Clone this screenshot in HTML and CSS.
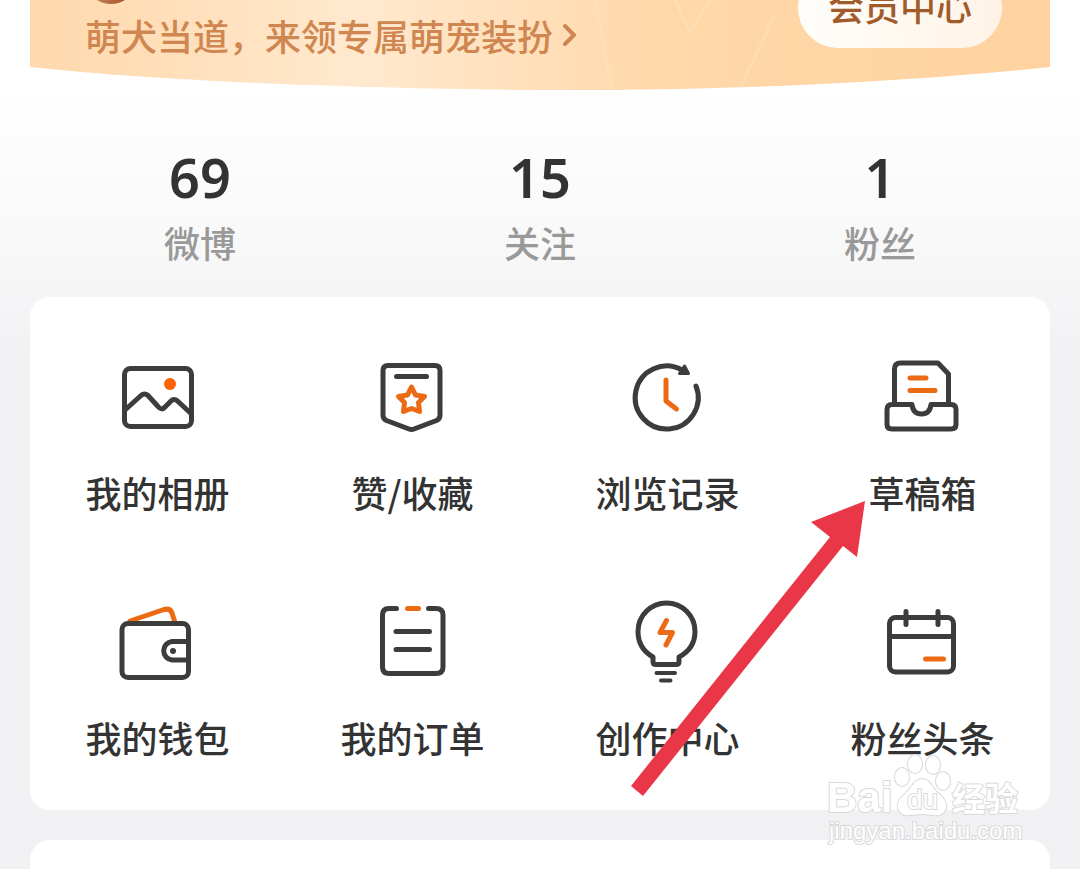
FILE: index.html
```html
<!DOCTYPE html>
<html lang="zh-CN">
<head>
<meta charset="utf-8">
<meta name="viewport" content="width=device-width, initial-scale=1">
<title>我的</title>
<link rel="stylesheet" href="styles.css">
</head>
<body>
<div class="page">
  <header class="banner">
    <svg class="banner-art" viewBox="0 0 1020 90" preserveAspectRatio="none" aria-hidden="true">
      <defs>
        <linearGradient id="gold" x1="0" y1="0" x2="1" y2="0">
          <stop offset="0" stop-color="#ffd9ae"/>
          <stop offset="0.1" stop-color="#ffddb5"/>
          <stop offset="0.32" stop-color="#ffe9cf"/>
          <stop offset="0.5" stop-color="#ffdfb9"/>
          <stop offset="0.62" stop-color="#ffd8a9"/>
          <stop offset="1" stop-color="#ffd2a0"/>
        </linearGradient>
        <linearGradient id="ring" x1="0" y1="0" x2="1" y2="0">
          <stop offset="0" stop-color="#c58a62"/>
          <stop offset="1" stop-color="#a3481f"/>
        </linearGradient>
      </defs>
      <path fill="url(#gold)" d="M0 0H1020V67C870 83 690 90 540 90C370 90 150 83 0 67Z"/>
      <path fill="none" stroke="#ffe3c0" stroke-width="3" opacity="0.5" d="M565 0L582 90M645 0L660 32L680 0M745 15L710 88"/>
      <circle cx="81" cy="-22" r="24" fill="#e8b98f" stroke="url(#ring)" stroke-width="4"/>
    </svg>
    <a class="promo" href="#">萌犬当道，来领专属萌宠装扮<svg class="chevron" viewBox="0 0 14 24" aria-hidden="true"><path d="M2 3L11 12L2 21"/></svg></a>
    <button class="member" type="button">会员中心</button>
  </header>

  <nav class="stats">
    <a class="stat" href="#"><span class="count">69</span><span class="caption">微博</span></a>
    <a class="stat" href="#"><span class="count">15</span><span class="caption">关注</span></a>
    <a class="stat" href="#"><span class="count">1</span><span class="caption">粉丝</span></a>
  </nav>

  <main class="card">
    <nav class="tools">
      <a class="tool" href="#">
        <svg class="icon" viewBox="112 352 91 90" aria-hidden="true">
          <rect x="124.500" y="368.500" width="67" height="58" rx="6"/>
          <path d="M125 410L141 395.500Q144.500 392.500 148 395.500L158 406.500Q161.500 411 165 407L171 401Q174 398 177.500 401L191 413.500"/>
          <circle class="dot" cx="170" cy="384" r="6"/>
        </svg>
        我的相册
      </a>
      <a class="tool" href="#">
        <svg class="icon" viewBox="367 352 91 90" aria-hidden="true">
          <path d="M388 365.500H435Q440 365.500 440 370.500V415Q440 419 436.500 420.500L414 429Q411.500 430 409 429L386.500 420.500Q383 419 383 415V370.500Q383 365.500 388 365.500Z"/>
          <path d="M396.500 376.500H426.500"/>
          <path class="accent" d="M411.500 387L415.500 395L424.500 396.500L418.500 402.500L419.500 411.500L411.500 408.500L403.500 411.500L404.500 402.500L398.500 396.500L407.500 395Z"/>
        </svg>
        赞/收藏
      </a>
      <a class="tool" href="#">
        <svg class="icon" viewBox="622 352 91 90" aria-hidden="true">
          <path d="M696 386A31.500 31.500 0 1 1 682 370"/>
          <path class="solid" d="M684.500 366L688.500 373.500L679.500 373.500Z"/>
          <path class="accent" d="M666 380V401L676.500 409"/>
        </svg>
        浏览记录
      </a>
      <a class="tool" href="#">
        <svg class="icon" viewBox="877 352 91 90" aria-hidden="true">
          <path d="M894.500 404V369Q894.500 363 900.500 363H938L948.500 374V404"/>
          <path d="M912 404.500H892Q887 404.500 887 409.500V424.500Q887 429 892 429H951Q956 429 956 424.500V409.500Q956 404.500 951 404.500H931Q930 414 921.500 414Q913 414 912 404.500Z"/>
          <path class="eraser" d="M915 404H928"/>
          <path class="accent" d="M910 378H926M910 390.500H935"/>
        </svg>
        草稿箱
      </a>
      <a class="tool" href="#">
        <svg class="icon" viewBox="112 597 91 90" aria-hidden="true">
          <path class="accent" d="M130 621L164 609.500Q170 608 172 613L174.500 621"/>
          <rect x="122" y="623.500" width="66.500" height="54" rx="6"/>
          <path d="M188 641.500H172A9.300 9.300 0 0 0 172 660H188"/>
          <circle class="solid-dot" cx="173" cy="651" r="3"/>
        </svg>
        我的钱包
      </a>
      <a class="tool" href="#">
        <svg class="icon" viewBox="367 597 91 90" aria-hidden="true">
          <path d="M396.500 608.500H389Q382.500 608.500 382.500 615V667Q382.500 673.500 389 673.500H436Q443 673.500 443 667V615Q443 608.500 436 608.500H428.500"/>
          <path d="M396 631.500H429.500M396 649.500H429.500"/>
          <path class="accent" d="M407.500 608.500H418.500"/>
        </svg>
        我的订单
      </a>
      <a class="tool" href="#">
        <svg class="icon" viewBox="622 597 91 90" aria-hidden="true">
          <path d="M653 657Q638 648.500 638 631.500A28.500 28.500 0 0 1 695 631.500Q695 648.500 679 657V661.500Q679 664.500 676 664.500H656Q653 664.500 653 661.500Z"/>
          <path class="thin" d="M656.500 673H675M661 680.500H670.500"/>
          <path class="accent" d="M666.500 620.500L660 632.500H672.500L666 645"/>
        </svg>
        创作中心
      </a>
      <a class="tool" href="#">
        <svg class="icon" viewBox="877 597 91 90" aria-hidden="true">
          <rect x="889.500" y="617.500" width="64" height="54.500" rx="6"/>
          <path d="M890 636.500H953M906 611.500V624.500M938 611.500V624.500"/>
          <path class="accent" d="M925.500 659H943.500"/>
        </svg>
        粉丝头条
      </a>
    </nav>
    <svg class="arrow" viewBox="0 0 236 296" aria-hidden="true">
      <path d="M234 0L226 56L212 45L12 295L0 285L199 36L180 21Z"/>
    </svg>
    <svg class="watermark" viewBox="0 0 204 96" aria-hidden="true">
      <text class="wm-name" x="5" y="58">Bai</text>
      <g class="wm-paw">
        <ellipse cx="80" cy="23" rx="7" ry="9"/>
        <ellipse cx="93" cy="10" rx="7" ry="9"/>
        <ellipse cx="111" cy="11" rx="7" ry="9"/>
        <ellipse cx="121" cy="27" rx="7" ry="9"/>
        <path d="M100 25C108 25 110 34 116 39C123 45 127 51 122 58C117 64 109 60 100 60C91 60 83 64 78 58C73 51 77 45 84 39C90 34 92 25 100 25Z"/>
      </g>
      <text class="wm-du" x="85" y="55">du</text>
      <text class="wm-cn" x="130" y="57">经验</text>
      <text class="wm-url" x="7" y="85">jingyan.baidu.com</text>
    </svg>
  </main>

  <section class="card card-next"></section>
</div>
</body>
</html>
```
FILE: styles.css
```css
* {
  box-sizing: border-box;
}

body {
  margin: 0;
  font-family: "Noto Sans CJK SC", "Noto Sans", sans-serif;
  font-size: 36px;
  line-height: 50px;
  color: #333;
  background: #f1f1f4;
}

a {
  color: inherit;
  text-decoration: none;
}

.page {
  display: flex;
  flex-direction: column;
  min-height: 100vh;
  padding: 0 30px;
  background: linear-gradient(#fff 90px, #fcfcfc 160px, #f8f8f9 250px, #f1f1f4 360px);
}

.banner {
  position: relative;
  display: flex;
  justify-content: space-between;
  align-items: flex-start;
  padding: 10px 48px 30px 55px;
  overflow: hidden;
}

.banner-art {
  position: absolute;
  inset: 0;
  width: 100%;
  height: 100%;
}

.promo {
  position: relative;
  display: flex;
  align-items: center;
  gap: 10px;
  color: #cf8650;
  font-weight: 500;
}

.chevron {
  width: 14px;
  height: 24px;
  fill: none;
  stroke: currentColor;
  stroke-width: 4;
  stroke-linecap: round;
  stroke-linejoin: round;
}

.member {
  position: relative;
  width: 204px;
  height: 80px;
  margin: -42px 0 0;
  padding: 0 0 6px;
  border: 0;
  border-radius: 40px;
  background: linear-gradient(90deg, #fffefb, #fef3e6);
  color: #a15a2a;
  font: inherit;
  font-weight: 500;
}

.stats {
  display: grid;
  grid-template-columns: repeat(3, 1fr);
  padding: 57px 0 30px;
}

.stat {
  display: flex;
  flex-direction: column;
  align-items: center;
  gap: 10px;
}

.count {
  font-family: "Noto Sans", sans-serif;
  font-size: 54px;
  font-weight: 600;
  line-height: 60px;
}

.caption {
  color: #999;
  font-weight: 500;
}

.card {
  position: relative;
  border-radius: 20px;
  background: #fff;
}

.card-next {
  flex: 1;
  margin-top: 30px;
  border-radius: 20px 20px 0 0;
}

.tools {
  display: grid;
  grid-template-columns: repeat(4, 1fr);
  row-gap: 80px;
  padding: 55px 0 48px;
}

.tool {
  display: flex;
  flex-direction: column;
  align-items: center;
  gap: 25px;
  font-weight: 500;
}

.icon {
  width: 91px;
  height: 90px;
  fill: none;
  stroke: #3c3c3c;
  stroke-width: 5;
  stroke-linecap: round;
  stroke-linejoin: round;
}

.icon .accent {
  stroke: #ec6a14;
}

.icon .thin {
  stroke-width: 4;
}

.icon .solid {
  fill: #3c3c3c;
  stroke-width: 3;
}

.icon .solid-dot {
  fill: #3c3c3c;
  stroke: none;
}

.icon .dot {
  fill: #ff6200;
  stroke: none;
}

.icon .eraser {
  stroke: #fff;
  stroke-linecap: butt;
}

.arrow {
  position: absolute;
  top: 204px;
  right: 183px;
  width: 236px;
  height: 296px;
  fill: #ea3748;
}

.watermark {
  position: absolute;
  z-index: 1;
  right: 24px;
  bottom: -40px;
  width: 204px;
  height: 96px;
  fill: #fff;
  stroke: #d9d9d9;
  stroke-width: 2;
  paint-order: stroke;
  font-family: "Liberation Sans", "Noto Sans CJK SC", sans-serif;
}

.wm-name {
  font-size: 42px;
  font-weight: 700;
}

.wm-du {
  font-size: 28px;
}

.wm-cn {
  font-size: 33px;
  font-weight: 700;
}

.wm-url {
  font-size: 24px;
}
```
